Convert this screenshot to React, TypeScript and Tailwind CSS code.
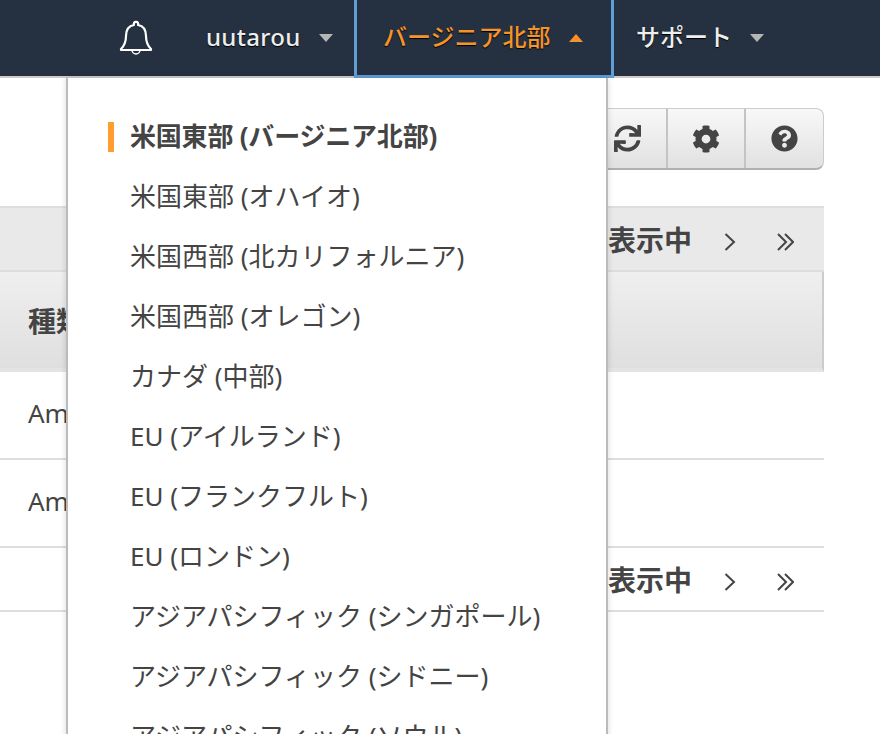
import React from 'react';
import { FaSync, FaCog, FaQuestionCircle } from 'react-icons/fa';

const FONT = "font-['Noto_Sans','Noto_Sans_CJK_JP',sans-serif]";

const regions = [
  '米国東部 (バージニア北部)',
  '米国東部 (オハイオ)',
  '米国西部 (北カリフォルニア)',
  '米国西部 (オレゴン)',
  'カナダ (中部)',
  'EU (アイルランド)',
  'EU (フランクフルト)',
  'EU (ロンドン)',
  'アジアパシフィック (シンガポール)',
  'アジアパシフィック (シドニー)',
  'アジアパシフィック (ソウル)',
];

function Caret({ up, color }: { up?: boolean; color: string }) {
  return (
    <svg width="14" height="8" viewBox="0 0 14 8" className="shrink-0">
      <path d={up ? 'M7 0 L14 8 L0 8 Z' : 'M0 0 L14 0 L7 8 Z'} fill={color} />
    </svg>
  );
}

function Bell() {
  return (
    <svg width="34" height="36" viewBox="0 0 34 36" fill="none" stroke="#fff" strokeWidth="2.2" strokeLinejoin="round">
      <path d="M17 2 a2 2 0 0 1 2 3 C25 6 27 11 27 16 C27 23 29 26 32 29 L32 30 L2 30 L2 29 C5 26 7 23 7 16 C7 11 9 6 15 5 a2 2 0 0 1 2 -3 Z" />
      <path d="M13 30 a4 4 0 0 0 8 0" strokeWidth="1.5" />
    </svg>
  );
}

function Pager() {
  return (
    <div className="flex items-center justify-end">
      <span className="pt-[1px] text-[28px] font-bold text-[#444]">1 から 2 件を表示中</span>
      <svg width="12" height="18" viewBox="0 0 12 18" fill="none" stroke="#444" strokeWidth="2" className="ml-[32px] mt-[6px]">
        <path d="M1.5 1 L10 9 L1.5 17" />
      </svg>
      <svg width="18" height="18" viewBox="0 0 18 18" fill="none" stroke="#444" strokeWidth="2" className="ml-[40px] mr-[30px] mt-[6px]">
        <path d="M2 1 L10 9 L2 17 M9 1 L17 9 L9 17" />
      </svg>
    </div>
  );
}

export default function App() {
  return (
    <div className={`relative h-[734px] w-[880px] overflow-hidden bg-white ${FONT}`}>
      {/* ヘッダー */}
      <header className="flex h-[78px] items-stretch border-b-2 border-[#ccc] bg-[#253140] pl-[119px] text-[24px] font-medium text-[#eee] [text-shadow:0_1px_1px_#000]">
        <div className="flex w-[87px] items-center">
          <Bell />
        </div>
        <div className="flex w-[148px] items-center">
          <span className="pb-[2px] tracking-[0.3px]">uutarou</span>
          <span className="ml-[18px]"><Caret color="#b5b5b5" /></span>
        </div>
        <div className="-mb-[2px] flex w-[260px] items-center border-[3px] border-t-0 border-[#5f9ed6] pl-[26px] text-[#f7932b]">
          <span className="pb-[2px]">バージニア北部</span>
          <span className="ml-[18px]"><Caret up color="#f7932b" /></span>
        </div>
        <div className="flex items-center pl-[22px]">
          <span className="pb-[2px]">サポート</span>
          <span className="ml-[18px]"><Caret color="#b5b5b5" /></span>
        </div>
      </header>

      {/* 背面のコンテンツ */}
      <main className="w-[824px] pt-[30px] text-[#444]">
        <div className="flex justify-end">
          <div className="flex h-[62px] overflow-hidden rounded-r-lg border border-b-2 border-[#ccc] border-b-[#b0b0b0] bg-gradient-to-b from-[#f8f8f8] to-[#e1e1e1] text-[#444]">
            <div className="flex w-[79px] items-center justify-center border-r-2 border-[#c4c4c4]"><FaSync size={27} /></div>
            <div className="flex w-[78px] items-center justify-center border-r-2 border-[#c4c4c4]"><FaCog size={28} /></div>
            <div className="flex w-[77px] items-center justify-center"><FaQuestionCircle size={27} /></div>
          </div>
        </div>
        <div className="mt-[36px] flex h-[66px] items-center justify-end border-y-2 border-[#ddd] bg-[#e9e9e9]">
          <Pager />
        </div>
        <div className="flex h-[100px] items-center border-b-4 border-[#e4e4e4] border-r-2 border-r-[#ccc] bg-gradient-to-b from-[#efefef] to-[#dfdfdf] pl-[28px]">
          <span className="pt-[1px] text-[28px] font-bold text-[#444]">種類</span>
        </div>
        <div className="flex h-[88px] items-center border-b-2 border-[#ddd] pb-[3px] pl-[28px] text-[26px]">Amazon Linux</div>
        <div className="flex h-[88px] items-center border-b-2 border-[#ddd] pb-[3px] pl-[28px] text-[26px]">Amazon Linux</div>
        <div className="flex h-[64px] items-center justify-end border-b-2 border-[#ddd]">
          <Pager />
        </div>
      </main>

      {/* リージョンメニュー */}
      <div className="absolute left-[66px] top-[78px] w-[542px] border-x-2 border-[#bbb] bg-white py-[29px] shadow-[0_0_6px_rgba(0,0,0,0.15)]">
        {regions.map((name, i) => (
          <div key={name} className="relative flex h-[60px] items-center pl-[62px] text-[26px] text-[#444]">
            {i === 0 && <span className="absolute left-[40px] top-[15px] h-[30px] w-[6px] bg-[#ff9d2e]" />}
            <span className={i === 0 ? 'pb-[2px] font-bold tracking-[-0.2px]' : 'pb-[2px]'}>{name}</span>
          </div>
        ))}
      </div>
    </div>
  );
}
